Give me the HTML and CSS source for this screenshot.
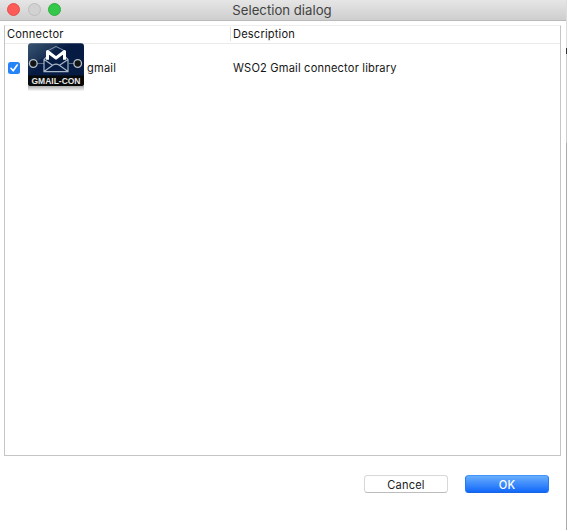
FILE: index.html
```html
<!DOCTYPE html>
<html lang="en">
<head>
<meta charset="utf-8">
<title>Selection dialog</title>
<link rel="stylesheet" href="styles.css">
</head>
<body>
<div class="screen">
  <main class="dialog">
    <header class="titlebar">
      <div class="lights"><i class="light close"></i><i class="light minimize"></i><i class="light maximize"></i></div>
      <h1 class="title"><span class="label title-label">Selection dialog</span></h1>
    </header>
    <section class="table">
      <div class="row head">
        <div class="cell"><span class="label">Connector</span></div>
        <div class="cell description"><span class="label">Description</span></div>
      </div>
      <div class="row item">
        <div class="cell connector">
          <svg class="check" viewBox="0 0 12 12"><rect width="12" height="12" rx="2.5" fill="#2583f7"/><path d="M3 6.3 5.2 8.8 9.2 3" fill="none" stroke="#fff" stroke-width="1.6" stroke-linecap="round" stroke-linejoin="round"/></svg>
          <svg class="logo" viewBox="0 0 58 50">
            <defs>
              <linearGradient id="navy" x1="0" y1="0" x2="1" y2="1"><stop offset="0" stop-color="#304c6a"/><stop offset=".28" stop-color="#10264a"/><stop offset=".4" stop-color="#061b43"/><stop offset="1" stop-color="#071b42"/></linearGradient>
              <linearGradient id="shadow" x1="0" y1="0" x2="0" y2="1"><stop offset="0" stop-color="#888"/><stop offset="1" stop-color="#fff"/></linearGradient>
              <clipPath id="card"><rect x="1" y="1.3" width="56" height="42.7" rx="3"/></clipPath>
            </defs>
            <rect x="1" y="41.5" width="56" height="8" rx="2" fill="url(#shadow)"/>
            <g clip-path="url(#card)">
              <rect x="1" y="1" width="56" height="43" fill="url(#navy)"/>
              <path d="M1 1H33Q22 15 1 24Z" fill="#64809b" opacity=".16"/>
              <rect x="1" y="33.5" width="56" height="11" fill="#080909"/>
            </g>
            <path d="M10 21.5H17M42 21.5H47" stroke="#5d7088" stroke-width="1"/>
            <g fill="#111516" stroke="#b9c1c8" stroke-width="1.3"><circle cx="6.3" cy="21.5" r="3.8"/><circle cx="50.7" cy="21.5" r="3.8"/></g>
            <path d="M20 14.5 17 17.5V29.6H41V17.5L38 14.5M17 17.5 25.5 23.3M41 17.5 32.5 23.3M17 29.5 26 23Q29 21.3 32 23L41 29.5" fill="none" stroke="#a7b6c6" stroke-width="1.2"/>
            <path d="M21 8.5 29 4.5 37 8.5" fill="none" stroke="#8498af"/>
            <path d="M20.5 17.8V9.5L29 16 37.5 9.5V17.8" fill="none" stroke="#fff" stroke-width="3" stroke-linejoin="round"/>
            <text class="logo-text" x="29" y="41.9" text-anchor="middle" textLength="49" lengthAdjust="spacingAndGlyphs">GMAIL-CON</text>
          </svg>
          <span class="label">gmail</span>
        </div>
        <div class="cell description"><span class="label">WSO2 Gmail connector library</span></div>
      </div>
    </section>
    <footer class="actions">
      <button class="button cancel"><span class="label">Cancel</span></button>
      <button class="button ok"><span class="label">OK</span></button>
    </footer>
  </main>
  <aside class="edge"><i class="edge-top"></i><i class="edge-mark"></i><i class="edge-upper"></i><i class="edge-lower"></i></aside>
</div>
</body>
</html>
```
FILE: styles.css
```css
* { box-sizing: border-box; }
body { margin: 0; background: #fff; font: 11.1px/14px Inter, sans-serif; letter-spacing: .18px; color: #161616; }
.screen { display: flex; width: 567px; height: 530px; overflow: hidden; }
.dialog { width: 566px; display: flex; flex-direction: column; }
.label { white-space: nowrap; }
.titlebar { height: 21px; flex: none; display: grid; grid-template-columns: 67px 1fr 69px; background: linear-gradient(#e6e6e6, #cecece); border-bottom: 1px solid #b9b9b9; }
.lights { display: flex; gap: 7.5px; padding: 3px 0 0 7px; }
.light { width: 13px; height: 13px; border: 1px solid #bdbdbd; border-radius: 50%; background: #d0d0d0; flex: none; }
.close { background: #fc5b57; border-color: #e5504d; }
.minimize { background: #d2d2d2; }
.maximize { background: #34c84a; border-color: #2dad3e; }
.title { margin: 0; padding-top: 2px; text-align: center; font-size: 13.2px; line-height: 16px; font-weight: 400; letter-spacing: 0; color: #424242; }
.table { height: 431px; flex: none; margin: 4px 5px 0 4px; border: 1px solid #c5c5c5; border-top-color: #eee; }
.row { display: grid; grid-template-columns: 225px 1fr; }
.head { height: 18px; border-bottom: 1px solid #ebebeb; padding-top: 1px; }
.head .cell { height: 14px; padding: 0 0 0 2px; line-height: 14px; }
.head .description { border-left: 1px solid #dedede; }
.item { height: 49px; align-items: center; margin-top: -1px; }
.item .description { padding-left: 3px; }
.connector { display: flex; align-items: center; padding-left: 3px; }
.check { width: 12px; height: 12px; flex: none; }
.logo { width: 58px; height: 50px; margin: -1px 2px 0 7px; flex: none; }
.logo-text { font: 700 8.8px "Liberation Sans", sans-serif; letter-spacing: 0; fill: #e8e8e8; }
.actions { display: flex; justify-content: flex-end; gap: 17px; padding: 19px 17px 0 0; }
.button { width: 84px; height: 18px; padding: 1px 0 0; border: 1px solid #d8d8d8; border-bottom-color: #bcbcbc; border-radius: 3.5px; background: #fff; font: inherit; letter-spacing: inherit; color: #202020; line-height: 16px; }
.ok { border-color: #4396fb #247bf5 #1765e0; background: linear-gradient(#68aefd, #1268fa); color: #fff; font-weight: 500; }
.edge { width: 1px; display: flex; flex-direction: column; background: #c5c5c5; }
.edge-top { height: 48px; background: #ddd; }
.edge-mark { height: 6px; background: #333; }
.edge-upper { height: 89px; background: #ccc; }
.edge-lower { height: 387px; background: #aaa; }
```
